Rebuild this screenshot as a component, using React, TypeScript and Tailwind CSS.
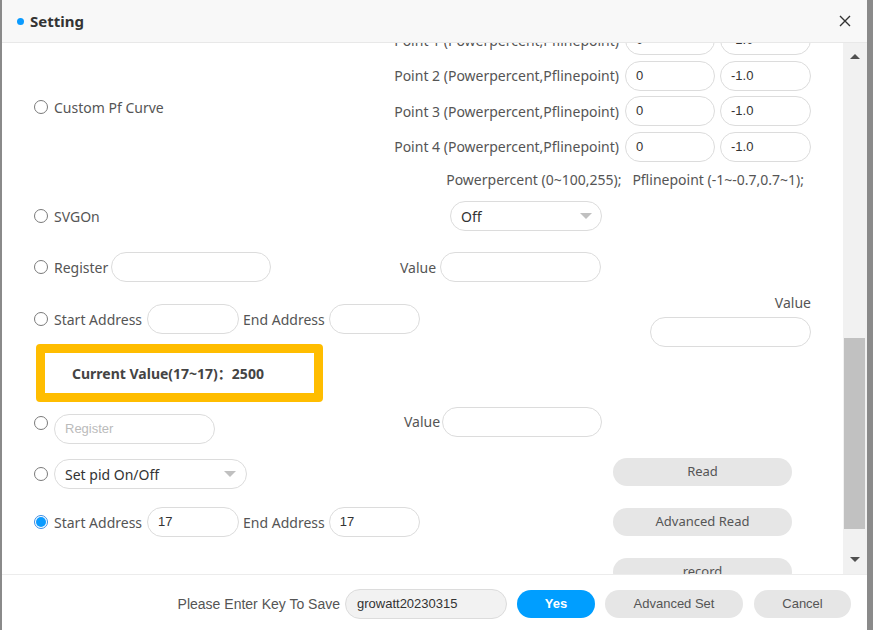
import React from 'react';

function Radio({ checked = false, className = '' }: { checked?: boolean; className?: string }) {
  if (checked) {
    return (
      <span className={`flex items-center justify-center w-[14px] h-[14px] shrink-0 rounded-full border border-[#3a8ee6] bg-white mr-[6px] ${className}`}>
        <span className="w-[10px] h-[10px] rounded-full bg-[#0a9bff]" />
      </span>
    );
  }
  return <span className={`block w-[14px] h-[14px] shrink-0 rounded-full border border-[#7a7a7a] bg-white mr-[6px] ${className}`} />;
}

function Pill({ value = '', placeholder = '', className = '' }: { value?: string; placeholder?: string; className?: string }) {
  return (
    <div className={`flex items-center h-[30px] shrink-0 rounded-full border border-[#dcdcdc] bg-white px-[10px] text-[13px] font-['Liberation_Sans',sans-serif] ${className}`}>
      {value ? <span className="text-[#333]">{value}</span> : <span className="text-[#bbb]">{placeholder}</span>}
    </div>
  );
}

function SelectBox({ label, className = '' }: { label: string; className?: string }) {
  return (
    <div className={`flex items-center justify-between h-[30px] shrink-0 rounded-full border border-[#dcdcdc] bg-white pl-[10px] pr-[9px] text-[14px] text-[#333] ${className}`}>
      <span>{label}</span>
      <span className="w-0 h-0 border-l-[6px] border-r-[6px] border-t-[6px] border-l-transparent border-r-transparent border-t-[#c0c0c0]" />
    </div>
  );
}

function GrayButton({ label, className = '' }: { label: string; className?: string }) {
  return (
    <div className={`flex items-center justify-center h-[28px] shrink-0 rounded-full bg-[#e6e6e6] text-[13px] text-[#555] ${className}`}>
      {label}
    </div>
  );
}

export default function App() {
  const points = ['Point 1', 'Point 2', 'Point 3', 'Point 4'];

  return (
    <div className="w-[873px] h-[630px] flex bg-[#8a8a8a] overflow-hidden font-['Noto_Sans','Noto_Sans_CJK_SC',sans-serif]">
      <div className="ml-[2px] w-[865px] h-full bg-white flex flex-col">
        {/* header */}
        <div className="h-[43px] shrink-0 bg-[#f8f8f8] border-b border-[#e8e8e8] flex items-center pl-[15px] pr-[16px]">
          <span className="w-[7px] h-[7px] rounded-full bg-[#0a9bff]" />
          <span className="ml-[6px] text-[15px] font-bold text-[#333]">Setting</span>
          <svg className="ml-auto" width="12" height="12" viewBox="0 0 12 12">
            <path d="M1 1L11 11M11 1L1 11" stroke="#333" strokeWidth="1.4" />
          </svg>
        </div>

        {/* body */}
        <div className="flex-1 flex min-h-0">
          <div className="w-[841px] overflow-hidden text-[14px] text-[#555]">
            <div className="-mt-[18px] pl-[32px] pr-[32px] flex flex-col">
              {/* custom pf curve */}
              <div className="flex items-center justify-between">
                <div className="flex items-center">
                  <Radio />
                  <span>Custom Pf Curve</span>
                </div>
                <div className="flex flex-col items-end gap-[5.5px]">
                  {points.map((p) => (
                    <div key={p} className="flex items-center gap-[5px]">
                      <span className="mr-[1px]">{p} (Powerpercent,Pflinepoint)</span>
                      <Pill value="0" className="w-[90px]" />
                      <Pill value="-1.0" className="w-[91px]" />
                    </div>
                  ))}
                  <div className="mt-[4px] pr-[7px] leading-[18px] whitespace-pre">
                    {'Powerpercent (0~100,255);   Pflinepoint (-1~-0.7,0.7~1);'}
                  </div>
                </div>
              </div>

              {/* SVGOn */}
              <div className="mt-[12px] flex items-center h-[30px]">
                <div className="w-[416px] flex items-center">
                  <Radio />
                  <span>SVGOn</span>
                </div>
                <SelectBox label="Off" className="w-[152px]" />
              </div>

              {/* Register */}
              <div className="mt-[21px] flex items-center h-[30px]">
                <div className="w-[366px] flex items-center">
                  <Radio />
                  <span>Register</span>
                  <Pill className="ml-[3px] w-[160px]" />
                </div>
                <span>Value</span>
                <Pill className="ml-[4px] w-[161px]" />
              </div>

              {/* Start / End address */}
              <div className="mt-[22px] flex items-start">
                <div className="flex items-center h-[30px]">
                  <Radio />
                  <span>Start Address</span>
                  <Pill className="ml-[5px] w-[92px]" />
                  <span className="ml-[4px]">End Address</span>
                  <Pill className="ml-[4px] w-[91px]" />
                </div>
                <div className="ml-auto -mt-[9px] flex flex-col items-end">
                  <span className="leading-[16px]">Value</span>
                  <Pill className="mt-[6px] w-[161px] h-[29px]" />
                </div>
              </div>

              {/* current value highlight */}
              <div className="-mt-[3px] ml-[2px] w-[287px] h-[58px] border-[9px] border-[#ffbd00] rounded-[4px] flex items-center pl-[27px] text-[14px] font-bold text-[#444]">
                Current Value(17~17)：2500
              </div>

              {/* register placeholder row */}
              <div className="mt-[5px] flex items-start">
                <div className="w-[370px] flex items-start pt-[7px]">
                  <Radio className="mt-[2px]" />
                  <Pill placeholder="Register" className="w-[161px]" />
                </div>
                <div className="flex items-center h-[29px]">
                  <span>Value</span>
                  <Pill className="ml-[2px] w-[160px] h-[29px]" />
                </div>
              </div>

              {/* set pid */}
              <div className="mt-[14px] flex items-start">
                <div className="w-[579px] mt-[1px] flex items-center h-[30px]">
                  <Radio />
                  <SelectBox label="Set pid On/Off" className="w-[193px] pr-[10px]" />
                </div>
                <GrayButton label="Read" className="w-[179px]" />
              </div>

              {/* start/end address checked */}
              <div className="mt-[18px] flex items-center">
                <div className="w-[579px] flex items-center h-[30px]">
                  <Radio checked />
                  <span>Start Address</span>
                  <Pill value="17" className="ml-[5px] w-[92px]" />
                  <span className="ml-[4px]">End Address</span>
                  <Pill value="17" className="ml-[4px] w-[91px]" />
                </div>
                <GrayButton label="Advanced Read" className="w-[179px]" />
              </div>

              <div className="mt-[21px] flex items-center">
                <div className="w-[579px]" />
                <GrayButton label="record" className="w-[179px]" />
              </div>
            </div>
          </div>

          {/* scrollbar */}
          <div className="w-[24px] bg-[#f1f1f1] flex flex-col">
            <div className="h-[26px] flex items-center justify-center">
              <span className="w-0 h-0 border-l-[5px] border-r-[5px] border-b-[5px] border-l-transparent border-r-transparent border-b-[#505050]" />
            </div>
            <div className="flex-1 pl-[1px] pr-[2px]">
              <div className="mt-[269px] h-[191px] bg-[#c1c1c1]" />
            </div>
            <div className="h-[30px] flex items-center justify-center">
              <span className="w-0 h-0 border-l-[5px] border-r-[5px] border-t-[5px] border-l-transparent border-r-transparent border-t-[#505050]" />
            </div>
          </div>
        </div>

        {/* footer */}
        <div className="h-[56px] shrink-0 border-t border-[#ececec] flex items-center justify-end pr-[16px] pt-[3px] text-[14px] font-['Liberation_Sans',sans-serif]">
          <span className="text-[#555]">Please Enter Key To Save</span>
          <div className="ml-[5px] w-[162px] h-[30px] flex items-center rounded-full border border-[#dcdcdc] bg-[#f2f2f2] pl-[11px] text-[13px] text-[#333]">
            growatt20230315
          </div>
          <div className="ml-[10px] w-[78px] h-[28px] flex items-center justify-center rounded-full bg-[#009eff] text-[13px] font-bold text-white">
            Yes
          </div>
          <GrayButton label="Advanced Set" className="ml-[10px] w-[138px]" />
          <GrayButton label="Cancel" className="ml-[11px] w-[97px]" />
        </div>
      </div>
    </div>
  );
}
